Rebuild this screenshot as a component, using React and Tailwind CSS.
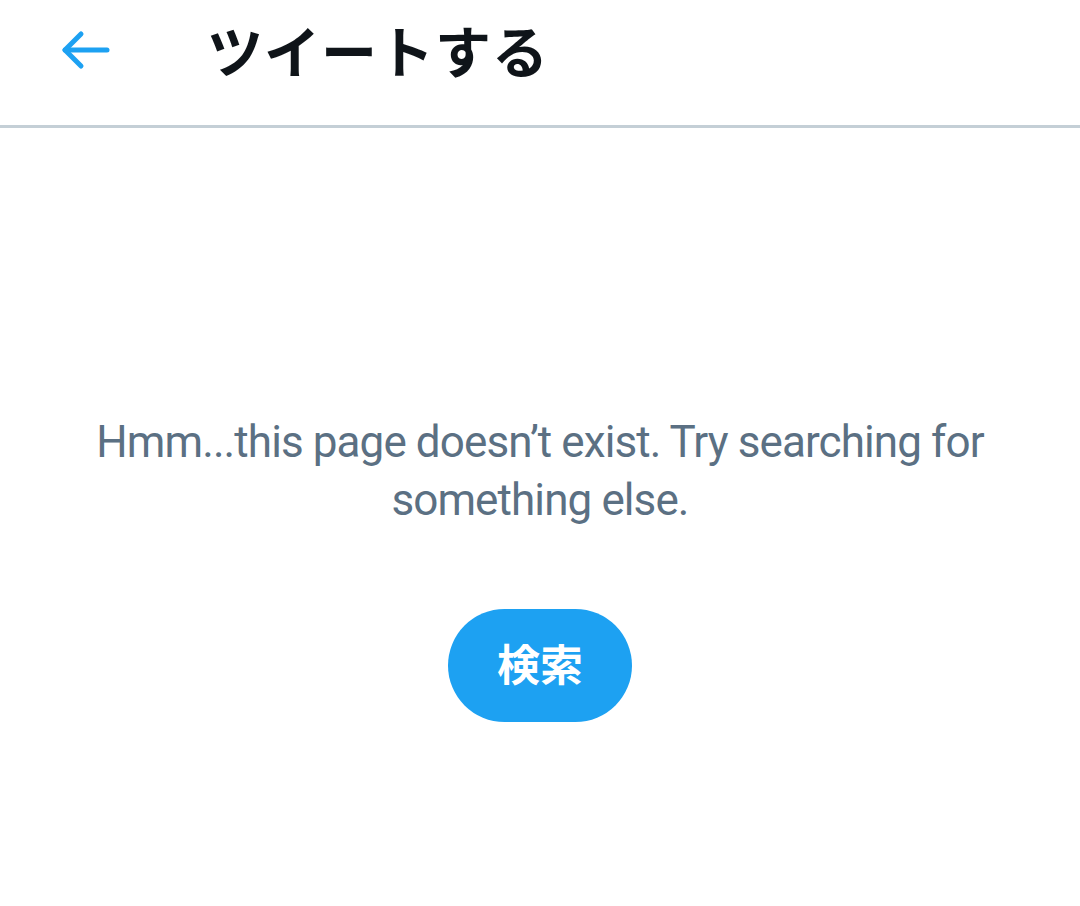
export default function App() {
  return (
    <div className="w-[1080px] h-[906px] bg-white flex flex-col" style={{ fontFamily: 'Roboto, "Noto Sans CJK JP", sans-serif' }}>
      <div className="h-[128px] border-b-[3px] border-[#c4cfd6] flex items-center pb-[26px]">
        <div className="w-[207px] pl-[61px] flex items-center">
          <svg width="50" height="40" viewBox="0 0 50 40" fill="none" stroke="#1da1f2" strokeWidth="5" strokeLinecap="round" strokeLinejoin="round">
            <path d="M4 20 H46" />
            <path d="M20 4 L4 20 L20 36" />
          </svg>
        </div>
        <h1 className="text-[56px] font-bold text-[#0f1419] leading-none tracking-[1px] -mt-[2px]" style={{ fontFamily: '"Noto Sans CJK JP", sans-serif' }}>
          ツイートする
        </h1>
      </div>
      <div className="flex flex-col items-center pt-[285px]">
        <p className="text-[44px] leading-[58px] tracking-[-0.9px] text-[#5b7083] text-center px-[60px]">
          Hmm...this page doesn’t exist. Try searching for something else.
        </p>
        <button className="mt-[80px] w-[184px] h-[113px] rounded-full bg-[#1da1f2] text-white text-[43px] font-bold flex items-center justify-center pb-[6px]" style={{ fontFamily: '"Noto Sans CJK JP", sans-serif' }}>
          検索
        </button>
      </div>
    </div>
  );
}
